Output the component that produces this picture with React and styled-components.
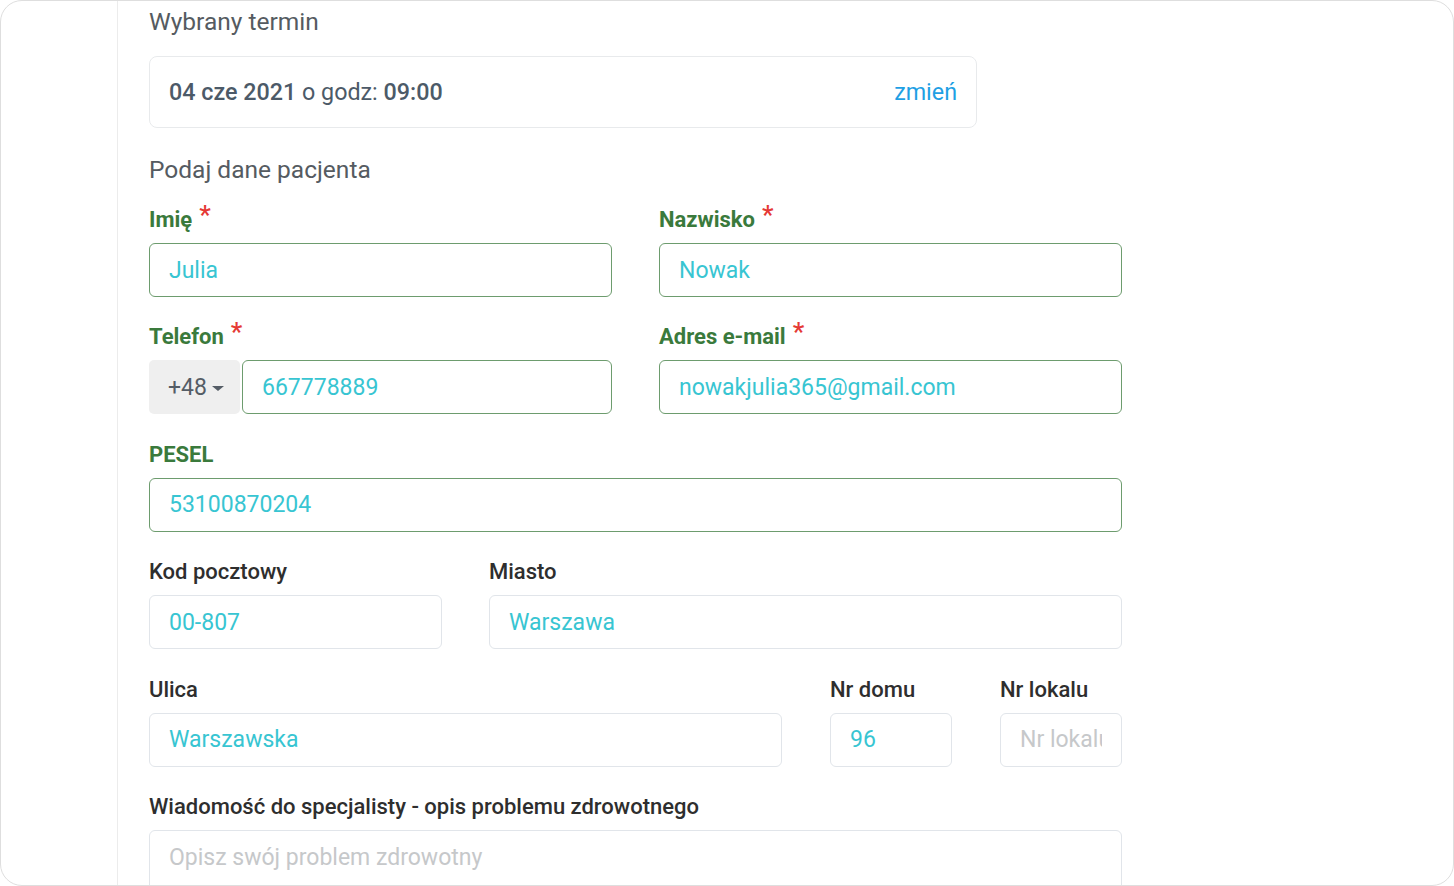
import React from "react";
import styled, { createGlobalStyle } from "styled-components";

const GlobalStyle = createGlobalStyle`
  html, body {
    margin: 0;
    padding: 0;
    background: #ffffff;
    font-family: Roboto, "Noto Sans", "Liberation Sans", sans-serif;
  }
  * {
    box-sizing: border-box;
  }
`;

const Frame = styled.div`
  width: 1454px;
  height: 886px;
  border: 1px solid #dedede;
  border-radius: 22px;
  overflow: hidden;
  display: flex;
  background: #ffffff;
`;

const Sidebar = styled.div`
  width: 117px;
  flex-shrink: 0;
  border-right: 1px solid #ececec;
`;

const Content = styled.div`
  padding: 5px 0 0 31px;
  width: 1004px;
`;

const SectionTitle = styled.div`
  font-size: 24.5px;
  line-height: 32px;
  color: #555b61;
  margin-bottom: ${({ mb }) => mb || 18}px;
`;

const DateBox = styled.div`
  width: 828px;
  height: 72px;
  border: 1px solid #e8eaec;
  border-radius: 8px;
  display: flex;
  align-items: center;
  justify-content: space-between;
  padding: 0 19px 0 19px;
  margin-bottom: 26px;
  font-size: 23.3px;
  color: #4c5a68;
`;

const Strong = styled.span`
  font-weight: 500;
`;

const ChangeLink = styled.a`
  color: #1ea0e4;
  font-size: 23.3px;
  text-decoration: none;
  cursor: pointer;
`;

const Grid = styled.div`
  display: grid;
  grid-template-columns: ${({ cols }) => cols};
  column-gap: ${({ gap }) => gap || 47}px;
  width: 973px;
`;

const Field = styled.div`
  display: flex;
  flex-direction: column;
  margin-top: 12px;
  margin-bottom: 14.4px;
`;

const Label = styled.label`
  font-size: 22px;
  line-height: 28px;
  height: 28px;
  font-weight: ${({ valid }) => (valid ? 700 : 500)};
  color: ${({ valid }) => (valid ? "#3a7a3c" : "#2e2e2e")};
  margin-bottom: 9px;
  white-space: nowrap;
`;

const Star = styled.span`
  color: #e53935;
  font-size: 26px;
  line-height: 0;
  position: relative;
  top: -3px;
  margin-left: 7px;
  font-weight: 500;
`;

const Input = styled.input`
  width: 100%;
  height: 54px;
  border: 1px solid ${({ valid }) => (valid ? "#6d9c6e" : "#e1e5ea")};
  border-radius: 6px;
  padding: 0 19px;
  font-family: inherit;
  font-size: 23px;
  color: #38c5d2;
  outline: none;
  background: #ffffff;
  &::placeholder {
    color: #c6c8ca;
  }
`;

const PhoneRow = styled.div`
  display: flex;
  gap: 2px;
`;

const Prefix = styled.div`
  width: 91px;
  height: 54px;
  flex-shrink: 0;
  background: #efefef;
  border-radius: 5px;
  display: flex;
  align-items: center;
  padding-left: 19px;
  font-size: 23px;
  color: #555d66;
  gap: 5px;
`;

const Caret = styled.span`
  width: 0;
  height: 0;
  border-left: 6px solid transparent;
  border-right: 6px solid transparent;
  border-top: 5px solid #555d66;
  margin-top: 3px;
`;

const TextArea = styled.textarea`
  width: 973px;
  height: 110px;
  border: 1px solid #e1e5ea;
  border-radius: 6px;
  padding: 13px 19px;
  font-family: inherit;
  font-size: 23px;
  color: #38c5d2;
  resize: none;
  outline: none;
  &::placeholder {
    color: #c6c8ca;
  }
`;

const Req = () => <Star>*</Star>;

const App = () => {
  return (
    <>
      <GlobalStyle />
      <Frame>
        <Sidebar />
        <Content>
          <SectionTitle>Wybrany termin</SectionTitle>
          <DateBox>
            <span>
              <Strong>04 cze 2021</Strong> o godz: <Strong>09:00</Strong>
            </span>
            <ChangeLink>zmień</ChangeLink>
          </DateBox>

          <SectionTitle mb={8}>Podaj dane pacjenta</SectionTitle>

          <Grid cols="463px 463px">
            <Field>
              <Label valid>
                Imię<Req />
              </Label>
              <Input valid defaultValue="Julia" />
            </Field>
            <Field>
              <Label valid>
                Nazwisko<Req />
              </Label>
              <Input valid defaultValue="Nowak" />
            </Field>
            <Field>
              <Label valid>
                Telefon<Req />
              </Label>
              <PhoneRow>
                <Prefix>
                  +48 <Caret />
                </Prefix>
                <Input valid defaultValue="667778889" />
              </PhoneRow>
            </Field>
            <Field>
              <Label valid>
                Adres e-mail<Req />
              </Label>
              <Input valid defaultValue="nowakjulia365@gmail.com" />
            </Field>
          </Grid>

          <Grid cols="973px">
            <Field>
              <Label valid>PESEL</Label>
              <Input valid defaultValue="53100870204" />
            </Field>
          </Grid>

          <Grid cols="293px 633px">
            <Field>
              <Label>Kod pocztowy</Label>
              <Input defaultValue="00-807" />
            </Field>
            <Field>
              <Label>Miasto</Label>
              <Input defaultValue="Warszawa" />
            </Field>
          </Grid>

          <Grid cols="633px 122px 122px" gap={48}>
            <Field>
              <Label>Ulica</Label>
              <Input defaultValue="Warszawska" />
            </Field>
            <Field>
              <Label>Nr domu</Label>
              <Input defaultValue="96" />
            </Field>
            <Field>
              <Label>Nr lokalu</Label>
              <Input placeholder="Nr lokalu" />
            </Field>
          </Grid>

          <Field>
            <Label>Wiadomość do specjalisty - opis problemu zdrowotnego</Label>
            <TextArea placeholder="Opisz swój problem zdrowotny" />
          </Field>
        </Content>
      </Frame>
    </>
  );
};

export default App;
